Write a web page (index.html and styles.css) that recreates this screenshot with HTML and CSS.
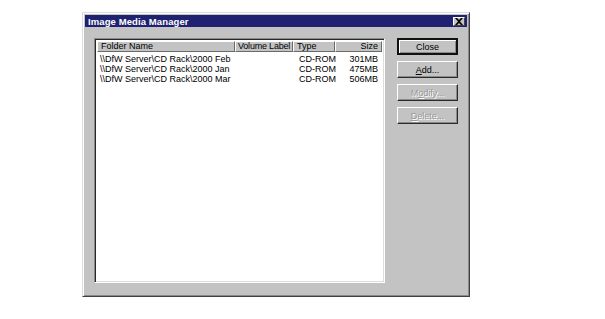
FILE: index.html
```html
<!DOCTYPE html>
<html lang="en">
<head>
  <meta charset="UTF-8">
  <title>Image Media Manager</title>
  <link rel="stylesheet" href="styles.css">
</head>
<body>
  <div class="window">
    <div class="titlebar">
      <span class="title">Image Media Manager</span>
      <span class="title-close">
        <svg width="8" height="7" viewBox="0 0 8 7"><path d="M0 0h2l2 2 2-2h2L5 3.5 8 7H6L4 5 2 7H0l3-3.5z" fill="#000"/></svg>
      </span>
    </div>
    <div class="content">
      <div class="listview">
        <div class="list-header">
          <div class="col col-name">Folder Name</div>
          <div class="col col-label">Volume Label</div>
          <div class="col col-type">Type</div>
          <div class="col col-size">Size</div>
        </div>
        <div class="list-body">
          <div class="row">
            <div class="cell col-name">\\DfW Server\CD Rack\2000 Feb</div>
            <div class="cell col-label"></div>
            <div class="cell col-type">CD-ROM</div>
            <div class="cell col-size">301MB</div>
          </div>
          <div class="row">
            <div class="cell col-name">\\DfW Server\CD Rack\2000 Jan</div>
            <div class="cell col-label"></div>
            <div class="cell col-type">CD-ROM</div>
            <div class="cell col-size">475MB</div>
          </div>
          <div class="row">
            <div class="cell col-name">\\DfW Server\CD Rack\2000 Mar</div>
            <div class="cell col-label"></div>
            <div class="cell col-type">CD-ROM</div>
            <div class="cell col-size">506MB</div>
          </div>
        </div>
      </div>
      <div class="buttons">
        <button class="btn btn-default">Close</button>
        <button class="btn"><u>A</u>dd...</button>
        <button class="btn" disabled>M<u>o</u>dify...</button>
        <button class="btn" disabled><u>D</u>elete...</button>
      </div>
    </div>
  </div>
</body>
</html>
```

FILE: styles.css
```css
body {
  margin: 0;
  background: #fff;
  font-family: "Liberation Sans", Arial, sans-serif;
  font-size: 9px;
  color: #000;
}
.window {
  margin: 12px 0 0 82px;
  width: 388px;
  height: 285px;
  box-sizing: border-box;
  background: #c3c3c3;
  padding: 2px;
  border: 1px solid;
  border-color: #dcdcdc #404040 #404040 #dcdcdc;
  box-shadow: inset 1px 1px 0 #fff, inset -1px -1px 0 #8a8a8a;
  display: flex;
  flex-direction: column;
}
.titlebar {
  height: 12px;
  background: #1f2270;
  display: flex;
  align-items: center;
  justify-content: space-between;
  padding: 0 2px 0 3px;
}
.title {
  color: #fff;
  font-weight: bold;
  font-size: 9.5px;
  letter-spacing: 0.1px;
}
.title-close {
  width: 12px;
  height: 9px;
  background: #c3c3c3;
  box-sizing: border-box;
  border: 1px solid;
  border-color: #fff #404040 #404040 #fff;
  display: flex;
  align-items: center;
  justify-content: center;
}
.content {
  display: flex;
  padding: 11px 0 0 9px;
}
.listview {
  width: 291px;
  height: 245px;
  box-sizing: border-box;
  background: #fff;
  border: 1px solid;
  border-color: #8a8a8a #fff #fff #8a8a8a;
  box-shadow: inset 1px 1px 0 #2a2a2a, inset -1px -1px 0 #dcdcdc;
  padding: 2px 2px 0 2px;
}
.list-header {
  display: flex;
  height: 11px;
}
.list-header .col {
  box-sizing: border-box;
  background: #c3c3c3;
  border: 1px solid;
  border-color: #fff #6a6a6a #6a6a6a #fff;
  padding: 0 3px;
  line-height: 9px;
  white-space: nowrap;
  overflow: hidden;
}
.list-header .col-label {
  padding: 0 1px 0 2px;
  letter-spacing: -0.2px;
}
.col-name { width: 138px; }
.col-label { width: 58px; }
.col-type { width: 42px; }
.col-size { width: 47px; text-align: right; }
.list-body {
  padding-top: 2px;
}
.row {
  display: flex;
  height: 10px;
  line-height: 10px;
}
.cell {
  box-sizing: border-box;
  padding: 0 3px;
  white-space: nowrap;
}
.row .col-type { padding-left: 6px; }
.row .col-size { padding-right: 4px; }
.buttons {
  display: flex;
  flex-direction: column;
  gap: 6px;
  margin-left: 12px;
}
.btn {
  width: 61px;
  height: 17px;
  box-sizing: border-box;
  background: #c3c3c3;
  font-family: "Liberation Sans", Arial, sans-serif;
  font-size: 9px;
  color: #000;
  padding: 0;
  border: 1px solid;
  border-color: #fff #2a2a2a #2a2a2a #fff;
  box-shadow: inset -1px -1px 0 #8a8a8a;
}
.btn-default {
  border: 2px solid #111;
  box-shadow: inset 1px 1px 0 #fff, inset -1px -1px 0 #8a8a8a;
}
.btn:disabled {
  color: #999;
  text-shadow: 1px 1px 0 #fff;
}
```
